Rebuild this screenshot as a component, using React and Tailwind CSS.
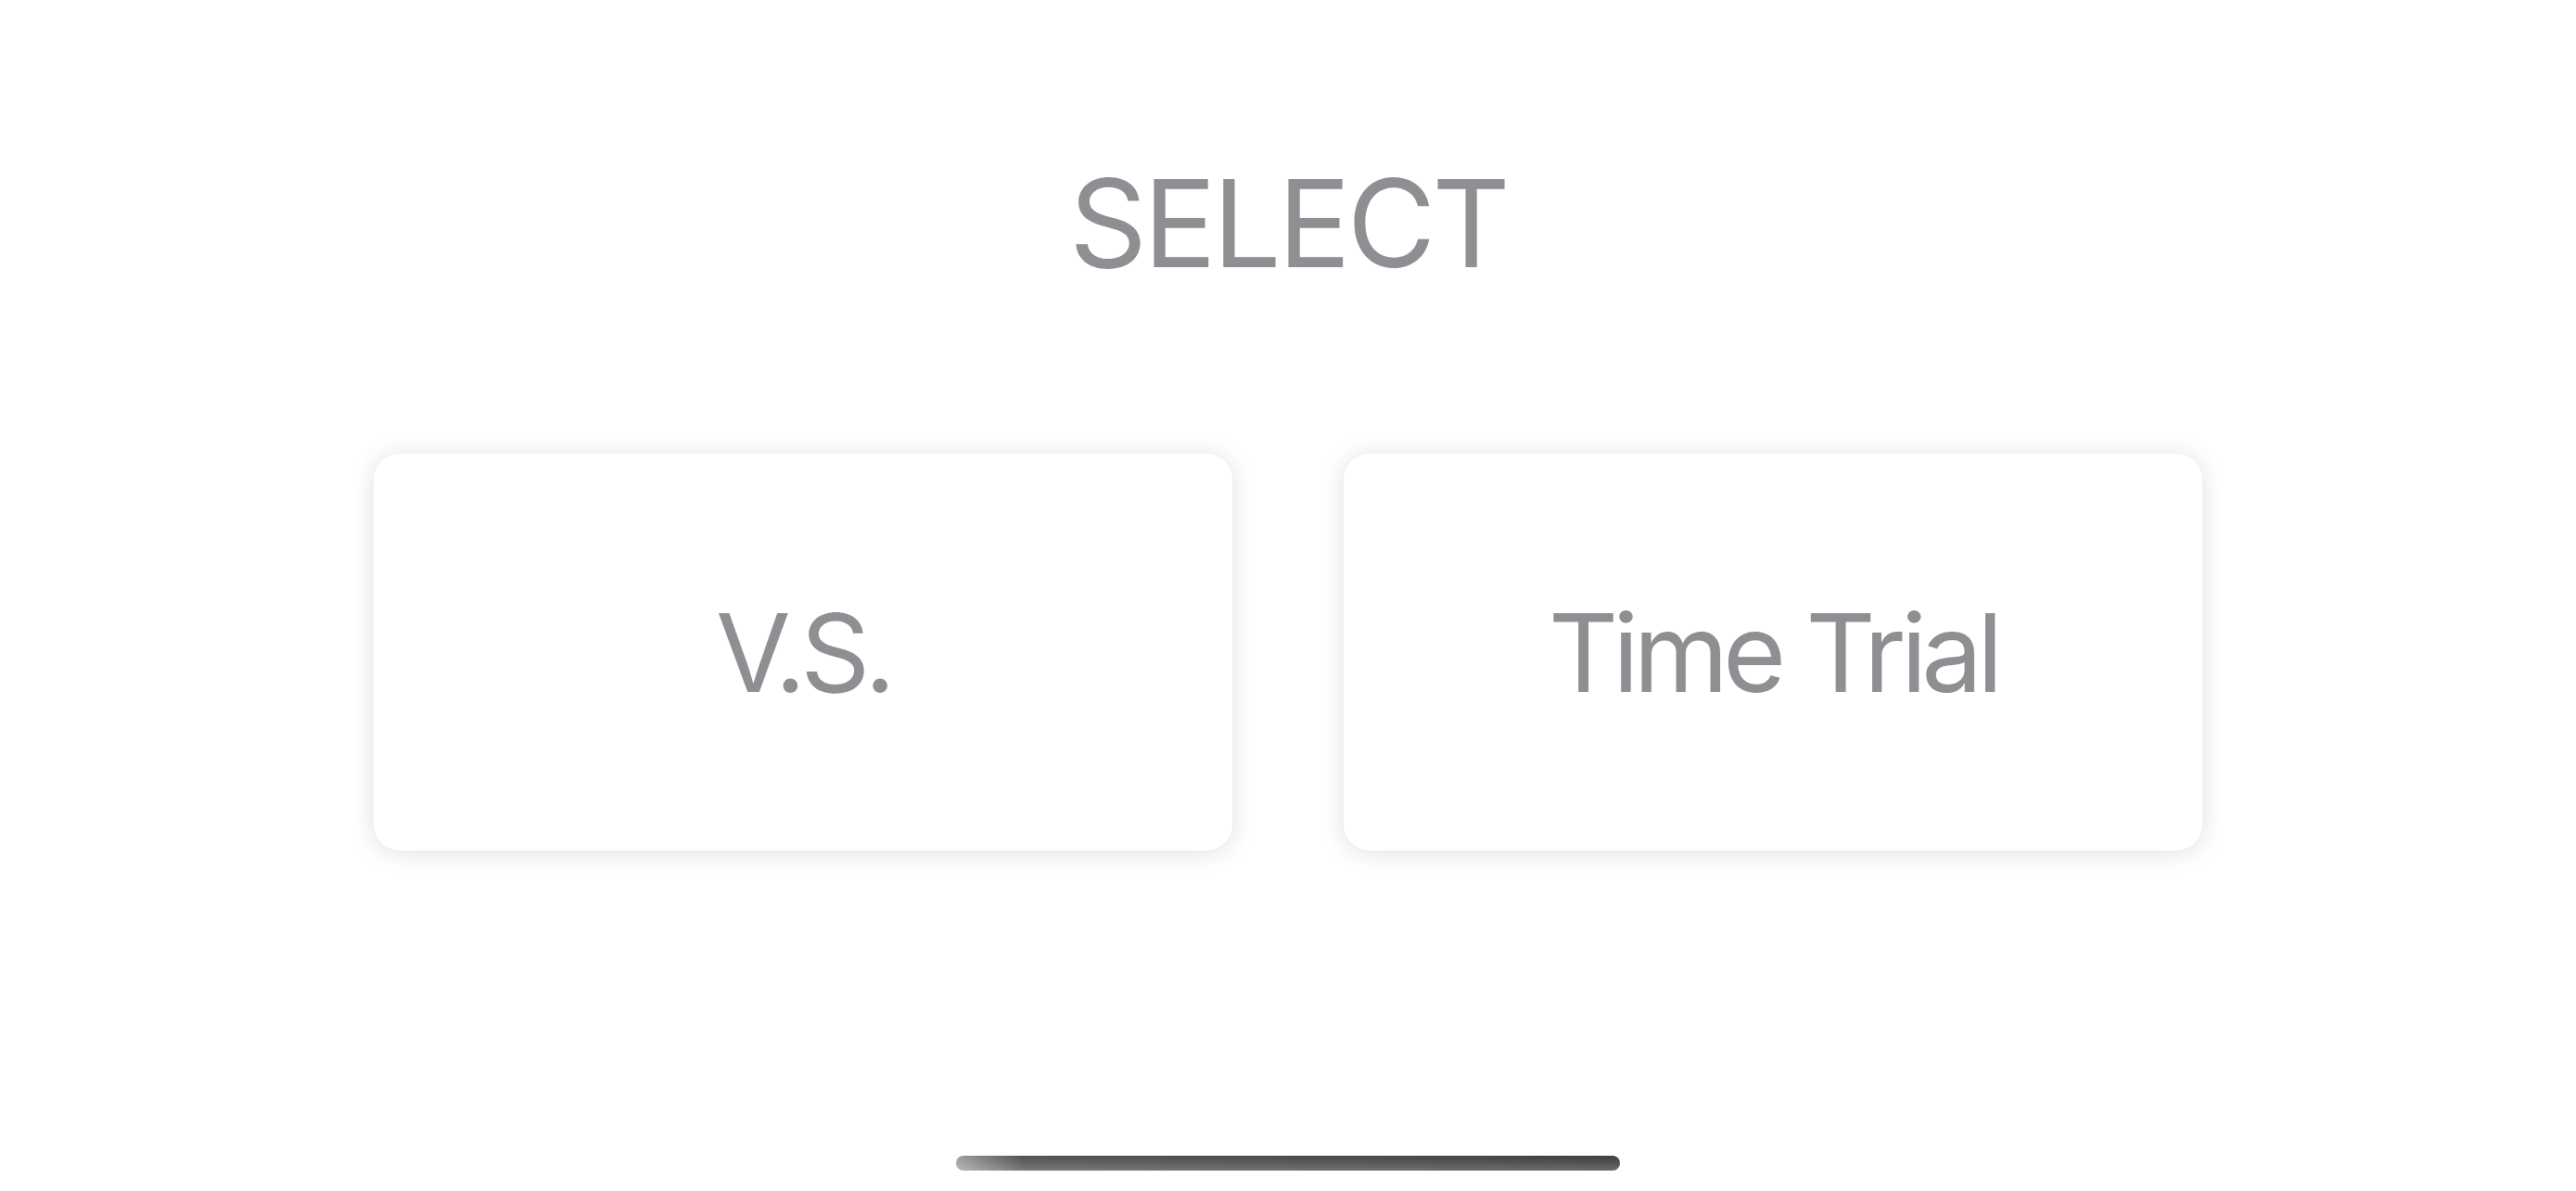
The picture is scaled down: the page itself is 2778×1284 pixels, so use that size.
import React from "react";

function ModeCard({ label }) {
  return (
    <button className="flex h-[428px] w-[926px] items-center justify-center rounded-[28px] bg-white shadow-[0_2px_26px_rgba(0,0,0,0.13)]">
      <span className="text-[117px] leading-none tracking-[-6px] text-[#8e8e93]">{label}</span>
    </button>
  );
}

export default function App() {
  return (
    <div className="flex h-[1284px] w-[2778px] flex-col items-center bg-white font-['Inter','Liberation_Sans',sans-serif]">
      <div className="mt-[175px] text-[131px] leading-none tracking-[-4px] text-[#8e8e93]">SELECT</div>
      <div className="mt-[183px] flex gap-[120px]">
        <ModeCard label="V.S." />
        <ModeCard label="Time Trial" />
      </div>
      <div className="mt-auto mb-[22px] h-[16px] w-[716px] overflow-hidden rounded-full bg-gradient-to-r from-[#a8a8a8] via-[#585858] via-[10%] to-[#444444]">
        <div className="h-full w-full bg-gradient-to-b from-black/5 to-white/20" />
      </div>
    </div>
  );
}
